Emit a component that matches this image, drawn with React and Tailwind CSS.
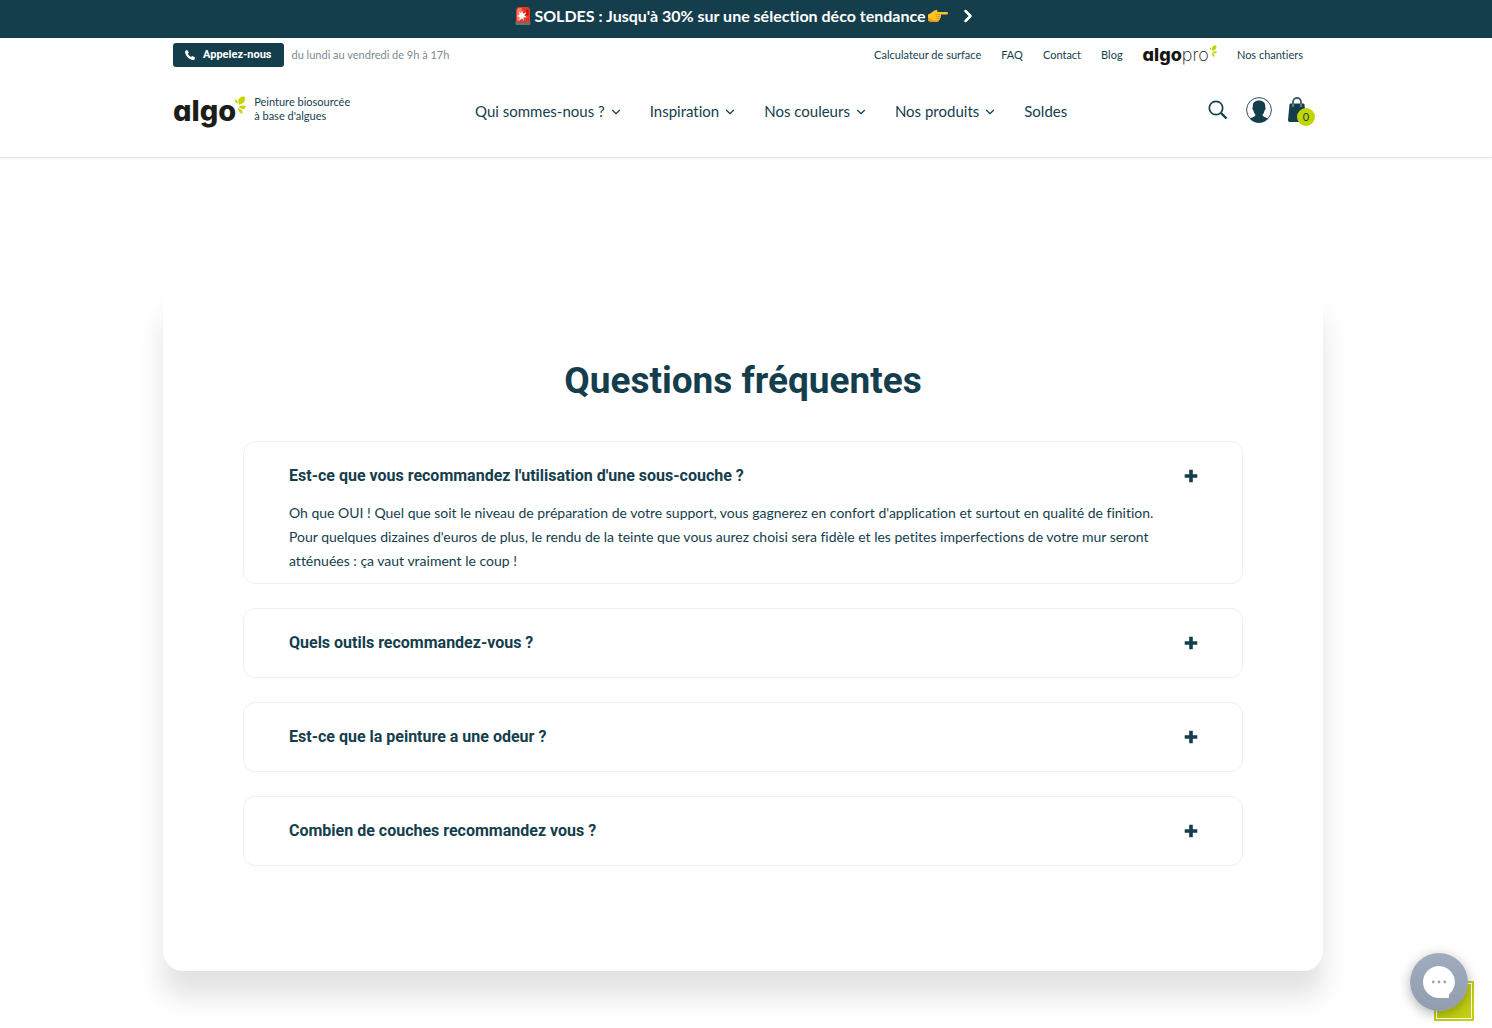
import { useState } from 'react'
import { ChevronDown, ChevronRight } from 'lucide-react'

const topLinks = ['Calculateur de surface', 'FAQ', 'Contact', 'Blog']

const menu = [
  { label: 'Qui sommes-nous ?', sub: true },
  { label: 'Inspiration', sub: true },
  { label: 'Nos couleurs', sub: true },
  { label: 'Nos produits', sub: true },
  { label: 'Soldes', sub: false },
]

const faqs = [
  {
    q: "Est-ce que vous recommandez l'utilisation d'une sous-couche ?",
    a: "Oh que OUI ! Quel que soit le niveau de préparation de votre support, vous gagnerez en confort d'application et surtout en qualité de finition. Pour quelques dizaines d'euros de plus, le rendu de la teinte que vous aurez choisi sera fidèle et les petites imperfections de votre mur seront atténuées : ça vaut vraiment le coup !",
  },
  { q: 'Quels outils recommandez-vous ?', a: 'Un rouleau, un pinceau à rechampir et un bac à peinture.' },
  { q: 'Est-ce que la peinture a une odeur ?', a: "Non, elle est quasiment sans odeur à l'application." },
  { q: 'Combien de couches recommandez vous ?', a: 'Deux couches suffisent dans la plupart des cas.' },
]

const Siren = () => (
  <svg viewBox="0 0 18 20" className="h-5 w-[18px]" aria-hidden="true">
    <path d="M2 16V4.500Q2 1 5.500 1h7Q16 1 16 4.500V16Z" fill="#e8391f" />
    <path d="M3 15V5Q3 2 6 2h2L6 15Z" fill="#f4796a" />
    <path d="M12 3.500h2.500v6h-2.500Z" fill="#b91f14" />
    <path d="m8 4 1 3.500 3.500-1-2.300 2.800 2.800 2-3.500.2.300 3.500L8 12.200l-2.500 2.300.2-3.500-3-1 3-1.300L5 5.500l2.200 1.800Z" fill="#fff" />
    <path d="M1.500 15.500h15V18q0 1-1 1h-13q-1 0-1-1Z" fill="#6d6f76" />
    <path d="M2 15h14v1.500H2Z" fill="#c0453a" />
  </svg>
)

const PointingHand = () => (
  <svg viewBox="0 0 20 14" className="h-3.5 w-5" aria-hidden="true">
    <path d="M0 5.500Q3 4.500 5.500 2 8 .5 9.500 1.200 10 2.200 8.800 3H18.500Q20 3 20 4.200T18.500 5.500H12.500Q13.500 6.200 12.800 7.500 13.200 8.800 12 9.500 12.200 10.800 11 11.300 10.800 12.800 9 12.800H4Q1.500 12.800 0 11.500Z" fill="#fdc12c" />
    <path d="M7.500 5.500h5M8 7.700h4.600M8 9.700h3.800" stroke="#e08f12" strokeWidth=".8" fill="none" />
    <path d="M0 8.500v3q1.500 1.300 4 1.300h5q1.300 0 1.800-1-5 .5-10.800-3.300Z" fill="#ee9a1c" />
  </svg>
)

const Leaves = ({ className }) => (
  <svg viewBox="0 0 12 18" className={className} fill="#c3d500" aria-hidden="true">
    <path d="M4.600 7.300Q3 2 8.300.6q3-.6 3 1.900Q11 7.200 5 8.700Z" />
    <path d="M.9 3.300Q3.600 3.600 3.900 7.600q-3.200-.6-3-4.300Z" />
    <path d="M4.800 10.700q3.400-2.100 7-.6.100 2.700-2.300 2.800-2.700.1-4.700-2.200Z" />
    <path d="M3.800 12q4.700.9 5 5.800-4.300-.8-5-5.800Z" />
  </svg>
)

const SearchIcon = () => (
  <svg viewBox="0 0 20 20" className="h-5 w-5" fill="none" stroke="#153e4d" aria-hidden="true">
    <circle cx="8" cy="8" r="6.700" strokeWidth="1.700" />
    <path d="m13 13 5.500 5.500" strokeWidth="2.400" />
  </svg>
)

const UserIcon = () => (
  <svg viewBox="0 0 26 26" className="h-[26px] w-[26px]" aria-hidden="true">
    <circle cx="13" cy="13" r="12.400" fill="#fff" stroke="#153e4d" strokeWidth=".9" />
    <path d="M13 3.500c4.600 0 6.500 2.500 6.200 6.600.7.500.4 2.800-.6 3.300-.4 2-1.200 3.300-2 4.200 0 1.300.3 1.600 1.500 2.100 1.600.8 3.200 1.200 3.900 2.100A12.200 12.200 0 0 1 4 21.800c.7-.9 2.300-1.300 3.900-2.100 1.200-.5 1.500-.8 1.500-2.100-.8-.9-1.600-2.200-2-4.200-1-.5-1.300-2.800-.6-3.300C6.500 6 8.400 3.500 13 3.500Z" fill="#153e4d" />
  </svg>
)

const BagIcon = () => (
  <svg viewBox="0 0 18 26" className="h-[26px] w-[18px]" aria-hidden="true">
    <path d="M1.500 7.500Q1.600 6.500 2.500 6.500h13q.9 0 1 1L18 23q0 2-1.500 2h-15Q0 25 0 23Z" fill="#153e4d" />
    <path d="M5 10V6M13 10V6" fill="none" stroke="#a9b8bd" strokeWidth="1" />
    <path d="M5 7V5a4 4 0 0 1 8 0v2" fill="none" stroke="#3c5d69" strokeWidth="1.800" />
  </svg>
)

const FaqItem = ({ id, item, open, onToggle }) => (
  <div className={`rounded-xl border border-[#efefef] pr-11 pl-[45px] pt-[22px] ${open ? 'pb-2.5' : 'pb-[22px]'}`}>
    <h3>
      <button
        type="button"
        aria-expanded={open}
        aria-controls={id}
        onClick={onToggle}
        className="flex h-6 w-full items-center justify-between text-left font-[Roboto] text-base font-bold"
      >
        {item.q}
        <svg viewBox="0 0 14 14" className="h-3.5 w-3.5" aria-hidden="true">
          <path d="M7 .7v12.600M.7 7h12.600" stroke="#153e4d" strokeWidth="3.600" />
        </svg>
      </button>
    </h3>
    {open && <p id={id} className="pt-[13px] pr-5 text-sm leading-6">{item.a}</p>}
  </div>
)

export default function App() {
  const [open, setOpen] = useState(0)

  return (
    <div className="min-h-screen bg-[#fefefe] font-[Lato,sans-serif] text-[#153e4d] [font-variant-ligatures:none]">
      <a href="#soldes" className="flex h-[38px] items-center justify-center bg-[#153e4d] pb-1.5 text-base font-bold text-white">
        <Siren />
        <span className="mx-0.5">SOLDES : Jusqu'à 30% sur une sélection déco tendance</span>
        <PointingHand />
        <ChevronRight className="ml-2.5 h-5 w-5" strokeWidth={3} />
      </a>

      <header className="h-[120px] border-b border-[#e5e7e8] bg-white pr-1.5 shadow-xs">
        <div className="mx-auto max-w-[1140px]">
          <div className="flex items-center justify-between pt-[5px]">
            <div className="flex items-center gap-2">
              <a href="#tel" className="flex h-6 items-center gap-2 rounded-[3px] bg-[#153e4d] px-3 font-[Roboto] text-[11px] font-bold text-white">
                <svg viewBox="0 0 10 10" className="h-2.5 w-2.5" fill="#fff" aria-hidden="true">
                  <path d="M.3.7 2.300 0l1.500 2.500-.9 1.200Q3.800 5.700 6 7l1.300-1L10 7.600 9.600 9.500Q8.500 10.300 6.500 9.700 1.200 7.800.1 2.800Z" />
                </svg>
                Appelez-nous
              </a>
              <span className="text-[11px] text-[#7b8b90]">du lundi au vendredi de 9h à 17h</span>
            </div>
            <nav aria-label="Liens utiles" className="flex items-center gap-5 pr-2.5 text-[11px]">
              {topLinks.map(l => <a key={l} href="#lien">{l}</a>)}
              <a href="#pro" className="flex h-6 items-center font-[Inter] text-lg leading-6 text-[#161615]">
                <span className="font-extrabold [font-feature-settings:'cv11']">algo</span>
                <span className="font-extralight">pro</span>
                <Leaves className="mb-2 h-3 w-2" />
              </a>
              <a href="#chantiers">Nos chantiers</a>
            </nav>
          </div>

          <div className="flex items-center justify-between pt-6">
            <a href="#accueil" className="flex items-center">
              <span className="font-[Inter] text-[29px] leading-10 font-extrabold text-[#1d1d1b] [font-feature-settings:'cv11']">algo</span>
              <Leaves className="mb-3 -ml-0.5 h-[18px] w-3" />
              <span className="mb-1 ml-2 text-[11px] leading-[14px]">Peinture biosourcée<br />à base d'algues</span>
            </a>
            <nav aria-label="Menu principal" className="flex items-center gap-[27px] pr-4">
              {menu.map(m => (
                <a key={m.label} href="#menu" className="flex items-center gap-1 text-[15px]">
                  {m.label}
                  {m.sub && <ChevronDown className="mt-0.5 h-3.5 w-3.5" />}
                </a>
              ))}
            </nav>
            <div className="flex items-center gap-4 pb-0.5">
              <button type="button" aria-label="Rechercher" className="mr-0.5"><SearchIcon /></button>
              <button type="button" aria-label="Mon compte"><UserIcon /></button>
              <button type="button" aria-label="Panier" className="relative pr-[7px]">
                <BagIcon />
                <span className="absolute -right-0.5 -bottom-[3px] flex h-[18px] w-[18px] items-center justify-center rounded-full bg-[#c3d500] text-[11px]">0</span>
              </button>
            </div>
          </div>
        </div>
      </header>

      <main className="pt-[132px] pr-1.5 pb-14">
        <section className="mx-auto max-w-[1160px] rounded-[20px] bg-white px-20 pt-[67px] pb-[105px] shadow-[0_25px_25px_rgba(0,0,0,0.11)]">
          <h2 className="text-center font-[Roboto] text-[37px] leading-[48px] font-bold">Questions fréquentes</h2>
          <div className="mt-9 flex flex-col gap-6">
            {faqs.map((item, i) => (
              <FaqItem key={item.q} id={`faq-${i}`} item={item} open={open === i} onToggle={() => setOpen(open === i ? -1 : i)} />
            ))}
          </div>
        </section>
      </main>

      {/* Floating buttons */}
      <button type="button" aria-label="Retour en haut" className="fixed right-[18px] bottom-[7px] h-10 w-10 bg-[#c1d012] p-0.5">
        <span className="block h-full w-full border border-white" />
      </button>
      <button type="button" aria-label="Ouvrir le chat" className="fixed right-6 bottom-[17px] flex h-[58px] w-[58px] items-center justify-center rounded-full bg-linear-to-b from-[#a0abbe] to-[#929db0] shadow-[0_3px_12px_rgba(0,0,0,0.3)]">
        <svg viewBox="0 0 32 32" className="h-8 w-8" aria-hidden="true">
          <path d="M16 0a16 16 0 1 0 0 32h10v-3.600A16 16 0 0 0 16 0Z" fill="#fff" />
          <g fill="#9aa5b8">
            <circle cx="10.300" cy="16" r="1.400" />
            <circle cx="16" cy="16" r="1.400" />
            <circle cx="21.700" cy="16" r="1.400" />
          </g>
        </svg>
      </button>
    </div>
  )
}
